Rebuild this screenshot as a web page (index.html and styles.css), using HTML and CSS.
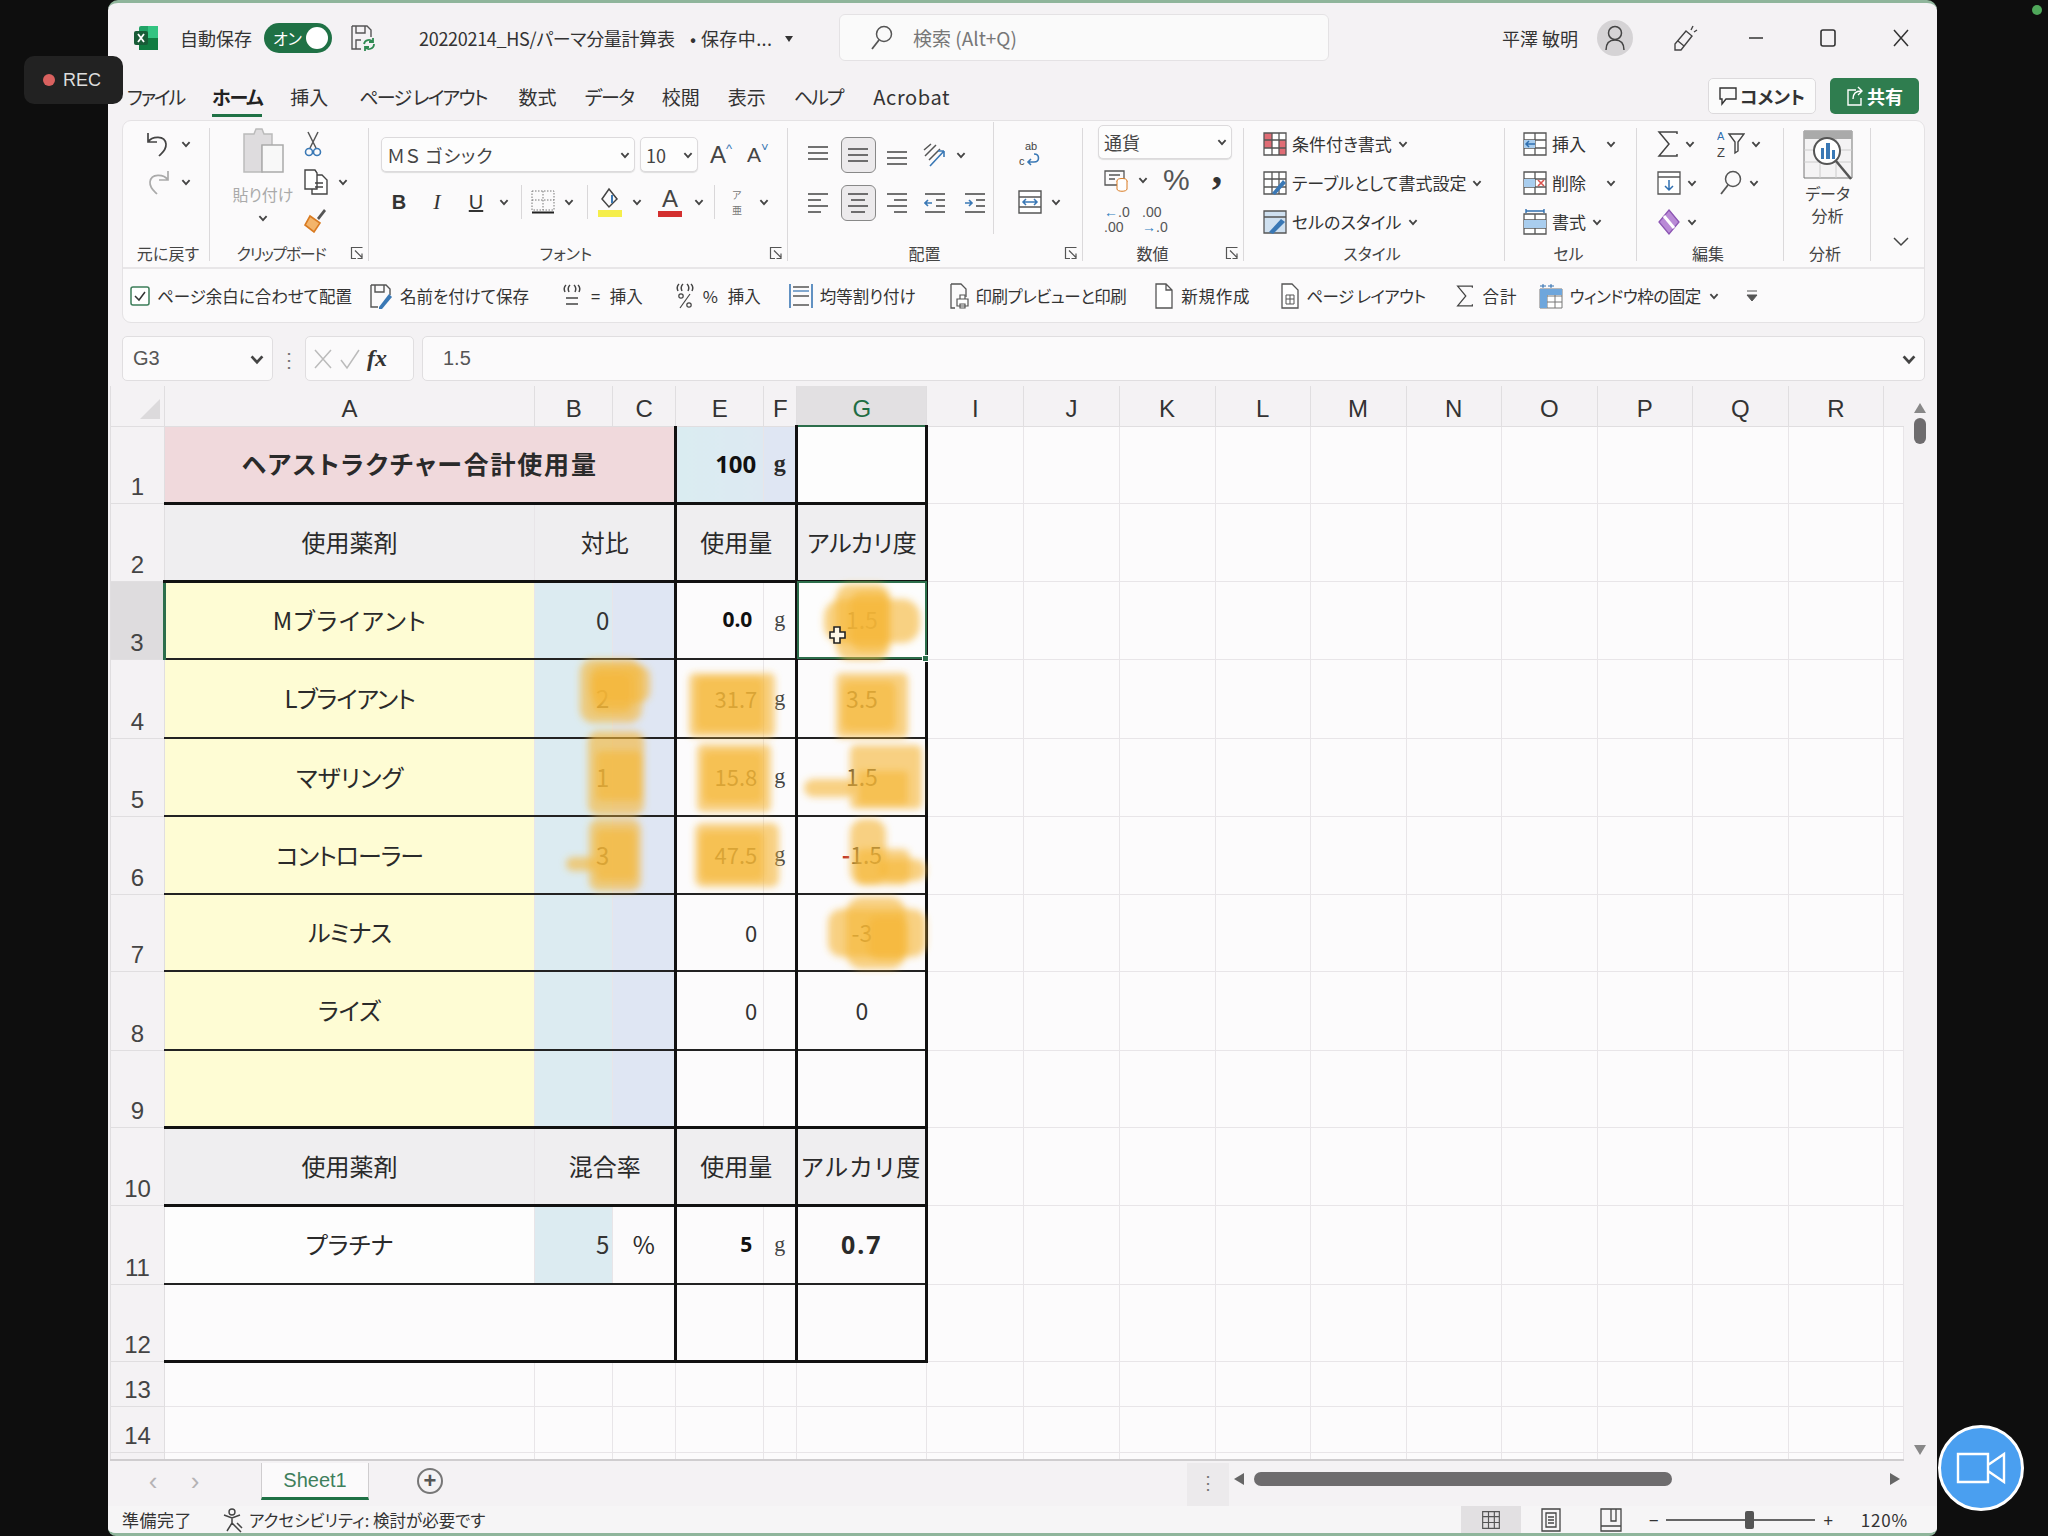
FILE: index.html
```html
<!DOCTYPE html>
<html lang="ja">
<head>
  <meta charset="UTF-8"/>
  <title>20220214_HSパーマ分量計算表 - Excel</title>
  <link rel="stylesheet" href="styles.css">
</head>
<body>

<svg class="defs" width="0" height="0">
  <symbol id="chev" viewBox="0 0 10 10"><path d="M2 3.5 5 6.8 8 3.5" fill="none" stroke="#444" stroke-width="1.5"/></symbol>
  <symbol id="launch" viewBox="0 0 14 14"><path d="M1.5 6V1.5H12.5M1.5 1.5V12.5H6M5 4.5 12 11.5M12 7.5V12.5H7.5" fill="none" stroke="#555" stroke-width="1.2"/></symbol>
  <symbol id="lines-top" viewBox="0 0 22 22"><path d="M1 3H21M1 9H21M1 15H21" stroke="#444" stroke-width="1.6"/></symbol>
  <symbol id="lines-mid" viewBox="0 0 22 22"><path d="M1 5H21M1 11H21M1 17H21" stroke="#444" stroke-width="1.6"/></symbol>
  <symbol id="lines-bot" viewBox="0 0 22 22"><path d="M1 8H21M1 14H21M1 20H21" stroke="#444" stroke-width="1.6"/></symbol>
  <symbol id="al-left" viewBox="0 0 22 22"><path d="M1 2H21M1 8H14M1 14H21M1 20H14" stroke="#444" stroke-width="1.6"/></symbol>
  <symbol id="al-center" viewBox="0 0 22 22"><path d="M1 2H21M4 8H18M1 14H21M4 20H18" stroke="#444" stroke-width="1.6"/></symbol>
  <symbol id="al-right" viewBox="0 0 22 22"><path d="M1 2H21M8 8H21M1 14H21M8 20H21" stroke="#444" stroke-width="1.6"/></symbol>
  <symbol id="cells" viewBox="0 0 24 24"><path d="M2 2H22V22H2ZM2 8H22M2 15H22M9 2V22M16 2V22" fill="none" stroke="#555" stroke-width="1.4"/></symbol>
</svg>

<div class="rec"><span class="rec-dot"></span>REC</div>
<span class="green-dot"></span>
<div class="cam-btn">
  <svg width="52" height="34" viewBox="0 0 52 34"><path d="M3 3H33V31H3ZM33 14 49 3V31L33 20" fill="none" stroke="#fff" stroke-width="2.4"/></svg>
</div>

<div class="window">

  <div class="titlebar">
    <svg class="logo" width="26" height="26" viewBox="0 0 26 26"><rect x="6" y="1" width="19" height="24" rx="2" fill="#21a366"/><rect x="15" y="1" width="10" height="12" fill="#33c481"/><rect x="6" y="13" width="19" height="12" fill="#107c41"/><rect x="1" y="6" width="14" height="14" rx="2" fill="#185c37"/><path d="M5 9 11 17M11 9 5 17" stroke="#fff" stroke-width="1.800"/></svg>
    <span class="autosave">自動保存</span>
    <span class="toggle"><span>オン</span><i></i></span>
    <svg class="save-sync" width="26" height="28" viewBox="0 0 26 28"><path d="M2 2H17L21 6V13M2 2V25H11M6 2V9H15V2M6 25V16H11" fill="none" stroke="#555" stroke-width="1.4"/><path d="M14 20a5 5 0 0 1 9-2M24 20a5 5 0 0 1-9 3M23 14V18H19M15 27V23H19" fill="none" stroke="#2f8a52" stroke-width="1.8"/></svg>
    <span class="doc-name">20220214_HS/パーマ分量計算表</span>
    <span class="doc-state">• 保存中...</span>
    <span class="caret"></span>
    <div class="searchbox">
      <svg width="24" height="26" viewBox="0 0 24 26"><circle cx="14" cy="9" r="7.5" fill="none" stroke="#555" stroke-width="1.5"/><path d="M9 15 2 24" stroke="#555" stroke-width="1.8"/></svg>
      <span>検索 (Alt+Q)</span>
    </div>
    <span class="user-name">平澤 敏明</span>
    <span class="avatar"><svg width="22" height="28" viewBox="0 0 22 28"><circle cx="11" cy="9" r="6.5" fill="none" stroke="#444" stroke-width="1.5"/><path d="M2 26c0-7 4-10 9-10s9 3 9 10" fill="none" stroke="#444" stroke-width="1.5"/></svg></span>
    <svg class="pen" width="26" height="28" viewBox="0 0 26 28"><path d="M14 7 20 12 9 26 3 26 3 20ZM6 17 12 22" fill="none" stroke="#444" stroke-width="1.4"/><path d="M19 6 21 2M22 8 25 6" stroke="#444" stroke-width="1.4"/></svg>
    <div class="win-btns">
      <svg width="16" height="16" viewBox="0 0 16 16"><path d="M1 8H15" stroke="#333" stroke-width="1.6"/></svg>
      <svg width="16" height="18" viewBox="0 0 16 18"><rect x="1" y="1" width="14" height="16" rx="2" fill="none" stroke="#333" stroke-width="1.6"/></svg>
      <svg width="18" height="18" viewBox="0 0 18 18"><path d="M2 1 16 17M16 1 2 17" stroke="#333" stroke-width="1.5"/></svg>
    </div>
  </div>

  <div class="menubar">
    <nav class="tabs">
      <span class="t-file">ファイル</span>
      <span class="on t-home">ホーム</span>
      <span>挿入</span>
      <span class="t-page">ページ レイアウト</span>
      <span>数式</span>
      <span class="t-data">データ</span>
      <span>校閲</span>
      <span>表示</span>
      <span class="t-help">ヘルプ</span>
      <span class="t-acro">Acrobat</span>
    </nav>
    <button class="comment-btn"><svg width="18" height="20" viewBox="0 0 18 20"><path d="M1 2H17V13H7L3 18V13H1Z" fill="none" stroke="#333" stroke-width="1.4"/></svg>コメント</button>
    <button class="share-btn"><svg width="18" height="22" viewBox="0 0 18 22"><path d="M10 5H2V20H15V13M7 14C7 9 10 6 15 6M12 2 16 6 12 10" fill="none" stroke="#fff" stroke-width="1.4"/></svg>共有</button>
  </div>

  <div class="ribbon">
    <div class="ribbon-main">

      <section class="group g-undo">
        <div class="gbody undo-body">
          <div class="undo-row">
            <svg width="26" height="26" viewBox="0 0 26 26"><path d="M3 2V11H12M3 11C7 5 20 4 21 13 21.500 19 17 22 14 25" fill="none" stroke="#444" stroke-width="1.7"/></svg>
            <svg class="chv" width="12" height="12"><use href="#chev"/></svg>
          </div>
          <div class="undo-row dim">
            <svg width="26" height="26" viewBox="0 0 26 26"><path d="M23 2V11H14M23 11C19 5 6 4 5 13 4.500 19 9 22 12 25" fill="none" stroke="#aaa" stroke-width="1.7"/></svg>
            <svg class="chv" width="12" height="12"><use href="#chev"/></svg>
          </div>
        </div>
        <div class="glabel"><span></span><span>元に戻す</span><span></span></div>
      </section>

      <section class="group g-clip">
        <div class="gbody clip-body">
          <div class="paste">
            <svg width="42" height="46" viewBox="0 0 42 46"><path d="M2 6H12L14 1H20L22 6H30V18H20V44H2Z" fill="#dedcde" stroke="#bbb" stroke-width="1.500"/><rect x="20" y="17" width="21" height="27" fill="#f8f8f8" stroke="#aaa" stroke-width="1.500"/></svg>
            <span>貼り付け</span>
            <svg width="12" height="12"><use href="#chev"/></svg>
          </div>
          <div class="clip-tools">
            <svg width="20" height="26" viewBox="0 0 20 26"><path d="M5 1 13 17M15 1 7 17" stroke="#555" stroke-width="1.5"/><circle cx="6" cy="21" r="3.500" fill="none" stroke="#3a78b5" stroke-width="1.6"/><circle cx="14" cy="21" r="3.500" fill="none" stroke="#3a78b5" stroke-width="1.6"/></svg>
            <span class="copy-row">
              <svg width="26" height="26" viewBox="0 0 26 26"><path d="M2 1H12L14 4V20H2ZM14 6H19L24 11V25H9V20M12 14H20M12 18H20" fill="#fff" stroke="#444" stroke-width="1.400"/></svg>
              <svg width="12" height="12"><use href="#chev"/></svg>
            </span>
            <svg width="24" height="26" viewBox="0 0 24 26"><path d="M14 11 21 2 23 4 16 13Z" fill="#555"/><path d="M7 9 17 16 11 25 2 18Z" fill="#f3b46a" stroke="#d97b22" stroke-width="1.600"/></svg>
          </div>
        </div>
        <div class="glabel"><span></span><span>クリップボード</span><svg class="lnch" width="14" height="14"><use href="#launch"/></svg></div>
      </section>

      <section class="group g-font">
        <div class="gbody font-body">
          <div class="font-row1">
            <div class="combo font-combo"><span>ＭＳ ゴシック</span><svg width="12" height="12"><use href="#chev"/></svg></div>
            <div class="combo size-combo"><span>10</span><svg width="12" height="12"><use href="#chev"/></svg></div>
            <span class="grow">A<sup>^</sup></span>
            <span class="shrink">A<sup>˅</sup></span>
          </div>
          <div class="font-row2">
            <b class="fb">B</b>
            <i class="fi">I</i>
            <u class="fu">U</u>
            <svg width="12" height="12"><use href="#chev"/></svg>
            <span class="vsep"></span>
            <svg width="24" height="24" viewBox="0 0 24 24"><path d="M1 1H23V20H1ZM12 1V20M1 10H23" fill="none" stroke="#777" stroke-width="1" stroke-dasharray="1.500 1.500"/><path d="M1 22.500H23" stroke="#222" stroke-width="2"/></svg>
            <svg width="12" height="12"><use href="#chev"/></svg>
            <span class="vsep"></span>
            <svg width="26" height="30" viewBox="0 0 26 30"><path d="M12 2 20 12 12 20 5 12Z" fill="none" stroke="#444" stroke-width="1.500"/><path d="M15 8V16" stroke="#3a78b5" stroke-width="2"/><rect x="1" y="23" width="24" height="7" fill="#f5ee4b"/></svg>
            <svg width="12" height="12"><use href="#chev"/></svg>
            <span class="font-color">A</span>
            <svg width="12" height="12"><use href="#chev"/></svg>
            <span class="vsep"></span>
            <span class="phonetic">ア<br>亜</span>
            <svg width="12" height="12"><use href="#chev"/></svg>
          </div>
        </div>
        <div class="glabel"><span></span><span>フォント</span><svg class="lnch" width="14" height="14"><use href="#launch"/></svg></div>
      </section>

      <section class="group g-align">
        <div class="gbody align-body">
          <div class="align-main">
            <div class="align-row">
              <svg width="22" height="22"><use href="#lines-top"/></svg>
              <span class="pressed"><svg width="22" height="22"><use href="#lines-mid"/></svg></span>
              <svg width="22" height="22"><use href="#lines-bot"/></svg>
              <svg width="26" height="26" viewBox="0 0 26 26"><path d="M3 14 14 3M7 18 18 7M2 8 9 2" stroke="#555" stroke-width="1.500"/><path d="M8 24 22 9M22 9H16M22 9V15" fill="none" stroke="#3a78b5" stroke-width="1.600"/></svg>
              <svg width="12" height="12"><use href="#chev"/></svg>
            </div>
            <div class="align-row">
              <svg width="22" height="22"><use href="#al-left"/></svg>
              <span class="pressed"><svg width="22" height="22"><use href="#al-center"/></svg></span>
              <svg width="22" height="22"><use href="#al-right"/></svg>
              <svg width="22" height="22" viewBox="0 0 22 22"><path d="M1 2H21M12 8H21M12 14H21M1 20H21" stroke="#444" stroke-width="1.600"/><path d="M8 11H1M4 8 1 11 4 14" fill="none" stroke="#3a78b5" stroke-width="1.600"/></svg>
              <svg width="22" height="22" viewBox="0 0 22 22"><path d="M1 2H21M12 8H21M12 14H21M1 20H21" stroke="#444" stroke-width="1.600"/><path d="M1 11H8M5 8 8 11 5 14" fill="none" stroke="#3a78b5" stroke-width="1.600"/></svg>
            </div>
          </div>
          <div class="align-wrap">
            <div class="wrap-row"><svg width="24" height="28" viewBox="0 0 24 28"><text x="7" y="10" class="ab">ab</text><text x="1" y="25" class="ab">c</text><path d="M10 22H16C22 22 22 14 16 14M13 19 10 22 13 25" fill="none" stroke="#3a78b5" stroke-width="1.600"/></svg></div>
            <div class="wrap-row"><svg width="24" height="24" viewBox="0 0 24 24"><path d="M1 1H23V23H1ZM1 7H23M1 17H23" fill="#fff" stroke="#555" stroke-width="1.400"/><path d="M5 12H19M8 9 5 12 8 15M16 9 19 12 16 15" fill="none" stroke="#3a78b5" stroke-width="1.500"/></svg><svg width="12" height="12"><use href="#chev"/></svg></div>
          </div>
        </div>
        <div class="glabel"><span></span><span>配置</span><svg class="lnch" width="14" height="14"><use href="#launch"/></svg></div>
      </section>

      <section class="group g-num">
        <div class="gbody num-body">
          <div class="combo num-combo"><span>通貨</span><svg width="12" height="12"><use href="#chev"/></svg></div>
          <div class="num-row">
            <svg width="24" height="24" viewBox="0 0 24 24"><path d="M1 3H20V17H1ZM5 7H16M5 11H11" fill="none" stroke="#555" stroke-width="1.300"/><ellipse cx="18" cy="13" rx="5" ry="2.500" fill="#fff" stroke="#d97b22"/><path d="M13 13V21C13 24 23 24 23 21V13" fill="#fff" stroke="#d97b22"/></svg>
            <svg width="12" height="12"><use href="#chev"/></svg>
            <span class="pct">%</span>
            <span class="comma">,</span>
          </div>
          <div class="num-row dec-row">
            <span class="dec"><i>←</i>.0<br>.00</span>
            <span class="dec">.00<br><i>→</i>.0</span>
          </div>
        </div>
        <div class="glabel"><span></span><span>数値</span><svg class="lnch" width="14" height="14"><use href="#launch"/></svg></div>
      </section>

      <section class="group g-style">
        <div class="gbody rows3 style-body">
          <div class="rrow"><svg width="24" height="24" viewBox="0 0 24 24"><path d="M1 1H23V23H1Z" fill="#fff"/><path d="M1 1H9V16H1ZM16 8H23V23H16Z" fill="#e06c75"/><path d="M1 1H23V23H1ZM1 8H23M1 16H23M9 1V23M16 1V23" fill="none" stroke="#555" stroke-width="1.300"/></svg><span>条件付き書式</span><svg width="12" height="12"><use href="#chev"/></svg></div>
          <div class="rrow"><svg width="24" height="24" viewBox="0 0 24 24"><path d="M1 1H23V23H1ZM1 8H23M1 16H23M9 1V23M16 1V23" fill="#fff" stroke="#555" stroke-width="1.300"/><path d="M9 22 20 9 23 12 12 24Z" fill="#3a78b5"/></svg><span>テーブルとして書式設定</span><svg width="12" height="12"><use href="#chev"/></svg></div>
          <div class="rrow"><svg width="24" height="24" viewBox="0 0 24 24"><path d="M1 1H23V23H1Z" fill="#cfe0f0" stroke="#555" stroke-width="1.300"/><path d="M1 7H23" stroke="#555" stroke-width="1.300"/><path d="M6 22 18 9 22 12 10 24Z" fill="#3a78b5"/></svg><span>セルのスタイル</span><svg width="12" height="12"><use href="#chev"/></svg></div>
        </div>
        <div class="glabel"><span></span><span>スタイル</span><span></span></div>
      </section>

      <section class="group g-cells">
        <div class="gbody rows3 cells-body">
          <div class="rrow"><svg width="24" height="24" viewBox="0 0 24 24"><path d="M1 1H23V23H1ZM1 8H23M1 16H23M12 1V23" fill="#fff" stroke="#555" stroke-width="1.300"/><path d="M1 8H12V16H1Z" fill="#a9cdee"/><path d="M12 12H3M6 9 3 12 6 15" fill="none" stroke="#2f6fb0" stroke-width="1.500"/></svg><span class="cell-name">挿入</span><svg width="12" height="12"><use href="#chev"/></svg></div>
          <div class="rrow"><svg width="24" height="24" viewBox="0 0 24 24"><path d="M1 1H23V23H1ZM1 8H23M1 16H23M12 1V23" fill="#fff" stroke="#555" stroke-width="1.300"/><path d="M1 8H12V16H1Z" fill="#a9cdee"/><path d="M15 9 21 15M21 9 15 15" stroke="#d9534f" stroke-width="1.600"/></svg><span class="cell-name">削除</span><svg width="12" height="12"><use href="#chev"/></svg></div>
          <div class="rrow"><svg width="24" height="26" viewBox="0 0 24 26"><path d="M1 5H23V25H1ZM1 11H23M1 19H23M12 5V25" fill="#fff" stroke="#555" stroke-width="1.300"/><path d="M1 11H23V19H1Z" fill="#a9cdee"/><path d="M3 2H21M3 0V4M21 0V4" stroke="#2f6fb0" stroke-width="1.400"/></svg><span>書式</span><svg width="12" height="12"><use href="#chev"/></svg></div>
        </div>
        <div class="glabel"><span></span><span>セル</span><span></span></div>
      </section>

      <section class="group g-edit">
        <div class="gbody rows3 edit-body">
          <div class="rrow">
            <svg width="22" height="26" viewBox="0 0 22 26"><path d="M20 3V1H2L12 13 2 25H20V23" fill="none" stroke="#444" stroke-width="1.500"/></svg>
            <svg width="12" height="12"><use href="#chev"/></svg>
            <svg class="ed2" width="28" height="30" viewBox="0 0 28 30"><text x="0" y="11" class="az-a">A</text><text x="0" y="28" class="az-z">Z</text><path d="M12 5H27L21 13V22L18 24V13Z" fill="none" stroke="#444" stroke-width="1.400"/></svg>
            <svg width="12" height="12"><use href="#chev"/></svg>
          </div>
          <div class="rrow">
            <svg width="24" height="24" viewBox="0 0 24 24"><path d="M1 1H23V23H1ZM1 6H23" fill="#fff" stroke="#555" stroke-width="1.300"/><path d="M12 9V19M8 15 12 19 16 15" fill="none" stroke="#2f6fb0" stroke-width="1.500"/></svg>
            <svg width="12" height="12"><use href="#chev"/></svg>
            <svg class="ed2b" width="24" height="28" viewBox="0 0 24 26"><circle cx="14" cy="9" r="7.500" fill="none" stroke="#555" stroke-width="1.500"/><path d="M9 15 2 24" stroke="#555" stroke-width="1.800"/></svg>
            <svg width="12" height="12"><use href="#chev"/></svg>
          </div>
          <div class="rrow">
            <svg width="24" height="26" viewBox="0 0 24 26"><path d="M12 1 22 13 12 25 2 13Z" fill="#b98ad6" stroke="#8c55b3" stroke-width="1.300"/><path d="M7 7 17 19" stroke="#fff" stroke-width="3"/></svg>
            <svg width="12" height="12"><use href="#chev"/></svg>
          </div>
        </div>
        <div class="glabel"><span></span><span>編集</span><span></span></div>
      </section>

      <section class="group g-ana">
        <div class="gbody ana-body">
          <svg width="50" height="50" viewBox="0 0 50 50"><path d="M1 1H49V48H1Z" fill="#f4f3f4" stroke="#777"/><path d="M1 9H49V1H1Z" fill="#aaa"/><path d="M1 20H49M1 32H49M17 9V48M33 9V48" stroke="#ccc"/><circle cx="24" cy="21" r="13" fill="#fff" stroke="#555" stroke-width="2"/><path d="M18 18h3v11h-3ZM23 13h4v16h-4ZM29 20h3v9h-3Z" fill="#3a78b5"/><path d="M33 31 48 49" stroke="#555" stroke-width="2.500"/></svg>
          <span>データ<br>分析</span>
        </div>
        <div class="glabel"><span></span><span>分析</span><span></span></div>
      </section>

      <svg class="collapse" width="18" height="14" viewBox="0 0 18 14"><path d="M2 3 9 10 16 3" fill="none" stroke="#444" stroke-width="1.500"/></svg>
    </div>

    <div class="qat">
      <span class="qi qi-check"><svg width="20" height="20" viewBox="0 0 20 20"><rect x="1" y="1" width="18" height="18" rx="2" fill="#fff" stroke="#3d7d5a" stroke-width="1.500"/><path d="M5 10 9 14 15 6" fill="none" stroke="#333" stroke-width="1.500"/></svg>ページ余白に合わせて配置</span>
      <span class="qi qi-save"><svg width="24" height="26" viewBox="0 0 24 26"><path d="M2 2H17L21 6V12M2 2V24H9M6 2V9H15V2" fill="none" stroke="#555" stroke-width="1.400"/><path d="M10 24 20 11 23 14 13 26H10Z" fill="#3a78b5"/></svg>名前を付けて保存</span>
      <span class="qi qi-eq"><svg width="22" height="26" viewBox="0 0 22 26"><path d="M5 2Q2 5 4 9M9 2Q6 5 8 9M13 2Q16 5 14 9M17 2Q20 5 18 9" fill="none" stroke="#444" stroke-width="1.500"/><path d="M5 15H17M5 21H17" stroke="#444" stroke-width="1.500"/></svg>= 挿入</span>
      <span class="qi qi-pc"><svg width="22" height="26" viewBox="0 0 22 26"><path d="M5 1Q2 4 4 8M9 1Q6 4 8 8M13 1Q16 4 14 8M17 1Q20 4 18 8" fill="none" stroke="#444" stroke-width="1.500"/><circle cx="7" cy="13" r="2.200" fill="none" stroke="#444" stroke-width="1.200"/><circle cx="15" cy="22" r="2.200" fill="none" stroke="#444" stroke-width="1.200"/><path d="M16 11 6 25" stroke="#444" stroke-width="1.200"/></svg>% 挿入</span>
      <span class="qi qi-dist"><svg width="24" height="26" viewBox="0 0 24 26"><path d="M1 1V25M23 1V25" stroke="#2f6fb0" stroke-width="1.500"/><path d="M4 4H20M4 13H20M4 22H20" stroke="#555" stroke-width="1.500"/><path d="M4 8H20" stroke="#2f6fb0" stroke-width="1.200"/></svg>均等割り付け</span>
      <span class="qi qi-print"><svg width="20" height="26" viewBox="0 0 20 26"><path d="M2 1H12L17 6V14M2 1V25H6" fill="none" stroke="#555" stroke-width="1.300"/><path d="M8 16H19V23H8ZM11 16V12H16V16M11 21H16V25H11Z" fill="#fff" stroke="#555" stroke-width="1.200"/></svg>印刷プレビューと印刷</span>
      <span class="qi qi-new"><svg width="20" height="26" viewBox="0 0 20 26"><path d="M2 1H12L18 7V25H2ZM12 1V7H18" fill="#fff" stroke="#555" stroke-width="1.300"/></svg>新規作成</span>
      <span class="qi qi-pl"><svg width="18" height="26" viewBox="0 0 18 26"><path d="M1 1H11L17 7V25H1Z" fill="#fff" stroke="#555" stroke-width="1.300"/><path d="M5 12H13V21H5ZM5 16H13M9 12V21" fill="none" stroke="#555"/></svg>ページ レイアウト</span>
      <span class="qi qi-sum"><svg width="18" height="24" viewBox="0 0 22 26"><path d="M20 3V1H2L12 13 2 25H20V23" fill="none" stroke="#444" stroke-width="1.500"/></svg>合計</span>
      <span class="qi qi-fr"><svg width="24" height="26" viewBox="0 0 24 26"><path d="M1 6H23V25H1ZM1 13H23M1 19H23M8 6V25M16 6V25" fill="#fff" stroke="#777"/><path d="M1 6H8V25H1ZM8 6H23V12H8Z" fill="#6ea6dc"/><path d="M4 1V5M1 3H7M12 1V5M9 3H15" stroke="#2f6fb0"/></svg>ウィンドウ枠の固定<svg width="12" height="12"><use href="#chev"/></svg></span>
      <svg class="qat-more" width="14" height="14" viewBox="0 0 14 14"><path d="M2 2H12M2 6H12L7 12Z" fill="#555" stroke="#555"/></svg>
    </div>
  </div>

  <div class="formula">
    <div class="namebox"><span>G3</span><svg width="18" height="18"><use href="#chev"/></svg></div>
    <span class="f-dots">⋮</span>
    <div class="fx-box">
      <svg width="20" height="22" viewBox="0 0 20 22"><path d="M2 2 18 20M18 2 2 20" stroke="#bbb" stroke-width="1.500"/></svg>
      <svg width="22" height="22" viewBox="0 0 22 22"><path d="M2 12 8 20 20 2" fill="none" stroke="#bbb" stroke-width="1.500"/></svg>
      <i>fx</i>
    </div>
    <div class="f-input"><span>1.5</span><svg width="18" height="18"><use href="#chev"/></svg></div>
  </div>

  <div class="sheet-wrap">
    <div class="sheet">
      <table class="grid">
        <colgroup>
          <col class="c-h"><col class="c-a"><col class="c-b"><col class="c-c"><col class="c-e"><col class="c-f"><col class="c-g"><col class="c-i">
          <col class="c-n"><col class="c-n2"><col class="c-n"><col class="c-n2"><col class="c-n"><col class="c-n2"><col class="c-n"><col class="c-n2"><col class="c-n"><col class="c-s">
        </colgroup>
        <thead>
          <tr class="heads">
            <th class="corner"><span></span></th><th>A</th><th>B</th><th>C</th><th>E</th><th>F</th><th class="sel-h">G</th><th>I</th><th>J</th><th>K</th><th>L</th><th>M</th><th>N</th><th>O</th><th>P</th><th>Q</th><th>R</th><th></th>
          </tr>
        </thead>
        <tbody>
          <tr class="r1">
            <th>1</th>
            <td colspan="3" class="k title-cell">ヘアストラクチャー合計使用量</td>
            <td class="k e total num-b">100</td><td class="k f total-g unit-b">g</td>
            <td class="k g"></td>
            <td></td><td></td><td></td><td></td><td></td><td></td><td></td><td></td><td></td><td></td><td></td>
          </tr>
          <tr class="r2">
            <th>2</th>
            <td class="k hd">使用薬剤</td><td colspan="2" class="k hd">対比</td>
            <td colspan="2" class="k hd e">使用量</td>
            <td class="k hd g">アルカリ度</td>
            <td></td><td></td><td></td><td></td><td></td><td></td><td></td><td></td><td></td><td></td><td></td>
          </tr>
          <tr class="r3 thin">
            <th class="sel-row">3</th>
            <td class="k yl sel-a wide">Mブライアント</td><td class="k bl val">0</td><td class="k cl"></td>
            <td class="k e num-b small">0.0</td><td class="k f unit">g</td>
            <td class="k g sel-cell val-c">1.5<i class="handle"></i></td>
            <td></td><td></td><td></td><td></td><td></td><td></td><td></td><td></td><td></td><td></td><td></td>
          </tr>
          <tr class="r4 thin">
            <th>4</th>
            <td class="k yl narrow">Lブライアント</td><td class="k bl val">2</td><td class="k cl"></td>
            <td class="k e val-e">31.7</td><td class="k f unit">g</td>
            <td class="k g val-c">3.5</td>
            <td></td><td></td><td></td><td></td><td></td><td></td><td></td><td></td><td></td><td></td><td></td>
          </tr>
          <tr class="r5 thin">
            <th>5</th>
            <td class="k yl">マザリング</td><td class="k bl val">1</td><td class="k cl"></td>
            <td class="k e val-e">15.8</td><td class="k f unit">g</td>
            <td class="k g val-c">1.5</td>
            <td></td><td></td><td></td><td></td><td></td><td></td><td></td><td></td><td></td><td></td><td></td>
          </tr>
          <tr class="r6 thin">
            <th>6</th>
            <td class="k yl narrow">コントローラー</td><td class="k bl val">3</td><td class="k cl"></td>
            <td class="k e val-e">47.5</td><td class="k f unit">g</td>
            <td class="k g val-c"><span class="neg">-</span>1.5</td>
            <td></td><td></td><td></td><td></td><td></td><td></td><td></td><td></td><td></td><td></td><td></td>
          </tr>
          <tr class="r7 thin">
            <th>7</th>
            <td class="k yl narrow">ルミナス</td><td class="k bl"></td><td class="k cl"></td>
            <td class="k e val-e">0</td><td class="k f"></td>
            <td class="k g val-c">-3</td>
            <td></td><td></td><td></td><td></td><td></td><td></td><td></td><td></td><td></td><td></td><td></td>
          </tr>
          <tr class="r8 thin">
            <th>8</th>
            <td class="k yl">ライズ</td><td class="k bl"></td><td class="k cl"></td>
            <td class="k e val-e">0</td><td class="k f"></td>
            <td class="k g val-c">0</td>
            <td></td><td></td><td></td><td></td><td></td><td></td><td></td><td></td><td></td><td></td><td></td>
          </tr>
          <tr class="r9">
            <th>9</th>
            <td class="k yl"></td><td class="k bl"></td><td class="k cl"></td>
            <td class="k e"></td><td class="k f"></td>
            <td class="k g"></td>
            <td></td><td></td><td></td><td></td><td></td><td></td><td></td><td></td><td></td><td></td><td></td>
          </tr>
          <tr class="r10">
            <th>10</th>
            <td class="k hd">使用薬剤</td><td colspan="2" class="k hd">混合率</td>
            <td colspan="2" class="k hd e">使用量</td>
            <td class="k hd g tight">アルカリ度</td>
            <td></td><td></td><td></td><td></td><td></td><td></td><td></td><td></td><td></td><td></td><td></td>
          </tr>
          <tr class="r11 thin">
            <th>11</th>
            <td class="k plain">プラチナ</td><td class="k bl val">5</td><td class="k pct-cell">%</td>
            <td class="k e num-b small">5</td><td class="k f unit">g</td>
            <td class="k g bold-c">0.7</td>
            <td></td><td></td><td></td><td></td><td></td><td></td><td></td><td></td><td></td><td></td><td></td>
          </tr>
          <tr class="r12">
            <th>12</th>
            <td colspan="3" class="k"></td>
            <td class="k e"></td><td class="k f"></td>
            <td class="k g"></td>
            <td></td><td></td><td></td><td></td><td></td><td></td><td></td><td></td><td></td><td></td><td></td>
          </tr>
          <tr class="r13">
            <th>13</th><td></td><td></td><td></td><td></td><td></td><td></td><td></td><td></td><td></td><td></td><td></td><td></td><td></td><td></td><td></td><td></td><td></td>
          </tr>
          <tr class="r14">
            <th>14</th><td></td><td></td><td></td><td></td><td></td><td></td><td></td><td></td><td></td><td></td><td></td><td></td><td></td><td></td><td></td><td></td><td></td>
          </tr>
          <tr class="r15">
            <th></th><td></td><td></td><td></td><td></td><td></td><td></td><td></td><td></td><td></td><td></td><td></td><td></td><td></td><td></td><td></td><td></td><td></td>
          </tr>
        </tbody>
      </table>

      <!-- marker scribbles and the cell cursor lie over the table, in page coordinates -->
      <svg class="scribble" viewBox="110 385 1794 1075">
        <defs><filter id="soft" x="-20%" y="-20%" width="140%" height="140%"><feGaussianBlur stdDeviation="3.500"/></filter></defs>
        <g filter="url(#soft)" fill="#f5b735" fill-opacity=".62">
          <rect x="836" y="583" width="54" height="76" rx="14"/><rect x="824" y="598" width="96" height="44" rx="18"/><rect x="850" y="590" width="40" height="60" rx="12"/>
          <rect x="580" y="658" width="62" height="64" rx="14"/><rect x="590" y="664" width="60" height="38" rx="12"/><rect x="592" y="672" width="40" height="40" rx="8"/>
          <rect x="689" y="672" width="86" height="64" rx="6"/><rect x="696" y="676" width="68" height="54" rx="6"/>
          <rect x="836" y="672" width="72" height="65" rx="6"/><rect x="842" y="680" width="54" height="50" rx="8"/>
          <rect x="588" y="730" width="56" height="84" rx="10"/><rect x="596" y="750" width="46" height="50" rx="6"/>
          <rect x="697" y="743" width="74" height="68" rx="6"/><rect x="703" y="750" width="60" height="52" rx="6"/>
          <rect x="850" y="744" width="72" height="64" rx="6"/><rect x="804" y="778" width="50" height="18" rx="9"/><rect x="858" y="770" width="50" height="34" rx="4"/>
          <rect x="589" y="818" width="52" height="72" rx="10"/><rect x="566" y="856" width="30" height="14" rx="7"/><rect x="596" y="828" width="40" height="52" rx="6"/>
          <rect x="695" y="822" width="84" height="64" rx="8"/><rect x="700" y="830" width="64" height="50" rx="6"/>
          <rect x="850" y="818" width="36" height="66" rx="14"/><rect x="856" y="848" width="54" height="36" rx="8"/><rect x="880" y="858" width="46" height="22" rx="10"/>
          <rect x="846" y="896" width="60" height="72" rx="16"/><rect x="828" y="908" width="98" height="48" rx="14"/><rect x="868" y="915" width="40" height="44" rx="10"/>
        </g>
        <path d="M834 626h6v5h5v6h-5v5h-6v-5h-4v-6h4Z" fill="#fff8e6" stroke="#222" stroke-width="1.600"/>
      </svg>
    </div>
    <div class="vscroll">
      <span class="arr-up"></span>
      <span class="v-thumb"></span>
      <span class="arr-down"></span>
    </div>
  </div>

  <div class="sheetbar">
    <span class="nav-arr">‹</span><span class="nav-arr">›</span>
    <span class="sheet-tab">Sheet1</span>
    <span class="add-sheet">+</span>
    <span class="split-dots">⋮</span>
    <div class="hscroll"><span class="arr-left"></span><span class="h-thumb"></span><span class="arr-right"></span></div>
  </div>

  <div class="statusbar">
    <span class="ready">準備完了</span>
    <span class="a11y"><svg width="22" height="26" viewBox="0 0 22 26"><circle cx="10" cy="5" r="3" fill="none" stroke="#444" stroke-width="1.400"/><path d="M2 8 10 11 18 8M10 11V16M10 16 5 24M10 16 19 25M15 16 20 21" fill="none" stroke="#444" stroke-width="1.500"/></svg>アクセシビリティ: 検討が必要です</span>
    <div class="views">
      <span class="view on"><svg width="20" height="22"><use href="#cells"/></svg></span>
      <span class="view"><svg width="20" height="24" viewBox="0 0 20 24"><path d="M1 1H19V23H1ZM5 5H15V19H5ZM7 9H13M7 12H13M7 15H13" fill="none" stroke="#444" stroke-width="1.300"/></svg></span>
      <span class="view"><svg width="22" height="24" viewBox="0 0 22 24"><path d="M1 1H21V23H1ZM11 1V13H16V1M1 18H21" fill="none" stroke="#444" stroke-width="1.300"/></svg></span>
    </div>
    <div class="zoom">
      <span>−</span>
      <div class="slider"><i></i></div>
      <span>+</span>
      <span class="zoom-val">120%</span>
    </div>
  </div>

</div>

</body>
</html>
```

FILE: styles.css
```css
* { box-sizing:border-box; }
html, body {
  margin:0; padding:0; width:2048px; height:1536px; overflow:hidden;
  background:#0e0e0e; color:#222;
  font-family:"Noto Sans CJK JP", "Noto Sans", sans-serif;
  font-feature-settings:"palt";
}
.defs { position:absolute; }

/* zoom recording overlays */
.rec {
  position:absolute; left:24px; top:56px; width:99px; height:48px; z-index:5;
  background:#222; border-radius:10px; color:#ddd; font:18px "Liberation Sans", sans-serif;
  display:flex; align-items:center; padding-left:19px; gap:8px;
}
.rec-dot { width:12px; height:12px; border-radius:50%; background:#d9615f; }
.green-dot { position:absolute; left:2032px; top:5px; width:10px; height:10px; border-radius:50%; background:#4fa75a; }
.cam-btn {
  position:absolute; left:1938px; top:1425px; width:86px; height:86px; z-index:5;
  border-radius:50%; background:#4a9ff0; border:3px solid #fff;
  display:flex; align-items:center; justify-content:center;
}

.window {
  position:absolute; left:108px; top:0; width:1829px; height:1536px;
  background:#f4f2f4; border-top:3px solid #8fb59b; border-bottom:3px solid #8fb59b;
  border-radius:10px 10px 8px 8px; overflow:hidden;
  display:flex; flex-direction:column;
}

/* title bar */
.titlebar { height:69px; flex:none; display:flex; align-items:center; padding:0 0 0 25px; font-size:18px; color:#333; }
.autosave { margin-left:21px; }
.toggle {
  margin-left:12px; width:68px; height:30px; border-radius:15px; background:#1f7145;
  color:#fff; font-size:16px; display:flex; align-items:center; justify-content:space-between; padding:0 4px 0 9px;
}
.toggle i { width:22px; height:22px; border-radius:50%; background:#fff; }
.save-sync { margin-left:18px; }
.doc-name { margin-left:43px; width:258px; white-space:nowrap; letter-spacing:-.3px; }
.doc-state { margin-left:13px; width:90px; white-space:nowrap; letter-spacing:.4px; }
.caret { margin-left:5px; border:4px solid transparent; border-top:6px solid #333; margin-top:6px; }
.searchbox {
  margin-left:46px; width:490px; height:47px; background:#fafafa; border:1px solid #e4e2e4; border-radius:6px;
  display:flex; align-items:center; gap:19px; padding-left:30px; color:#777;
}
.searchbox span { font-size:19px; }
.user-name { margin-left:173px; width:78px; white-space:nowrap; }
.avatar {
  margin-left:17px; width:36px; height:36px; border-radius:50%; background:#d5d3d5;
  display:flex; align-items:center; justify-content:center;
}
.pen { margin-left:39px; }
.win-btns { margin-left:50px; display:flex; align-items:center; gap:56px; }

/* tabs */
.menubar { height:48px; flex:none; display:flex; align-items:center; padding-right:18px; }
.tabs { display:flex; gap:28px; flex:1; padding-left:19px; font-size:19px; color:#333; height:100%; align-items:center; }
.tabs span { position:relative; white-space:nowrap; }
.tabs .on { font-weight:700; color:#222; }
.tabs .on::after { content:""; position:absolute; left:0; right:0; bottom:-7px; height:3px; background:#1f7145; }
.t-file { letter-spacing:-2.2px; }
.t-home { letter-spacing:-1.3px; }
.t-page { letter-spacing:-1.8px; margin-left:3px; margin-right:4px; }
.t-data { letter-spacing:-1.3px; }
.t-help { letter-spacing:-2px; }
.t-acro { font-size:20px; letter-spacing:.6px; margin-left:3px; }
.comment-btn, .share-btn {
  font:inherit; font-size:18px; font-weight:700; height:36px; border-radius:5px; display:flex; align-items:center; justify-content:center; gap:3px; padding:0;
}
.comment-btn { width:108px; background:#fbfbfb; border:1px solid #dcdadc; color:#333; margin-right:14px; }
.share-btn { width:89px; background:#2f7d4f; border:none; color:#fff; }

/* ribbon */
.ribbon {
  flex:none; margin:0 12px 0 14px; height:203px; background:#fbfafb; border:1px solid #e4e2e4; border-radius:9px;
  display:flex; flex-direction:column;
}
.ribbon-main { height:148px; display:flex; border-bottom:2px solid #e8e6e8; }
.group { position:relative; display:flex; flex-direction:column; height:146px; padding-top:1px; }
.group::after { content:""; position:absolute; right:0; top:7px; bottom:6px; width:1px; background:#dbd9db; }
.gbody { flex:1; min-height:0; }
.glabel {
  height:29px; flex:none; display:grid; grid-template-columns:1fr auto 1fr; align-items:center;
  justify-items:center; font-size:16px; color:#444; padding-right:5px;
}
.lnch { justify-self:end; }
.g-undo { width:87px; }
.g-clip { width:159px; }
.g-font { width:419px; }
.g-align { width:295px; }
.g-num { width:161px; }
.g-style { width:261px; }
.g-cells { width:132px; }
.g-edit { width:147px; }
.g-ana { width:87px; }
.g-undo .glabel span:nth-child(2) { margin-left:8px; letter-spacing:.2px; }
.g-clip .glabel span:nth-child(2) { letter-spacing:-1.4px; margin-right:12px; }
.g-font .glabel span:nth-child(2) { margin-right:20px; }
.g-align .glabel span:nth-child(2), .g-num .glabel span:nth-child(2) { margin-right:17px; }

.undo-body { padding:9px 0 0 22px; display:flex; flex-direction:column; gap:12px; }
.undo-row { display:flex; align-items:center; gap:9px; }

.clip-body { display:flex; padding:6px 0 0 18px; }
.paste { width:70px; display:flex; flex-direction:column; align-items:center; color:#aaa; font-size:16px; }
.paste span { margin-top:8px; line-height:24px; white-space:nowrap; }
.paste svg:last-child { margin-top:6px; }
.clip-tools { display:flex; flex-direction:column; gap:12px; margin-left:5px; padding-top:3px; align-items:flex-start; }
.copy-row { display:flex; align-items:center; gap:8px; }

.font-body { padding:15px 0 0 12px; display:flex; flex-direction:column; gap:12px; }
.font-row1 { display:flex; align-items:center; height:35px; }
.combo {
  height:35px; border:1px solid #dcdadc; border-radius:5px; background:#fdfdfd; box-shadow:0 1px 1px #ddd;
  display:flex; align-items:center; justify-content:space-between; padding:0 3px 0 5px; font-size:18px; color:#444;
}
.font-combo { width:254px; letter-spacing:1px; }
.size-combo { width:58px; margin-left:5px; }
.grow, .shrink { font:24px "Liberation Sans", sans-serif; color:#444; }
.grow { margin-left:12px; width:37px; }
.shrink { width:30px; font-size:21px; }
.grow sup, .shrink sup { font-size:13px; color:#3a78b5; vertical-align:10px; line-height:0; }
.font-row2 {
  display:grid; height:36px; align-items:center; justify-items:center;
  grid-template-columns:36px 40px 38px 18px 16px 28px 24px 12px 34px 20px 46px 12px 18px 28px 26px;
}
.fb, .fi, .fu { font:20px "Liberation Sans", sans-serif; color:#333; }
.fb { font-weight:700; }
.fi { font-style:italic; font-family:"Liberation Serif", serif; font-size:22px; }
.vsep { width:1px; height:34px; background:#d9d7d9; }
.font-color { font:24px/24px "Liberation Sans", sans-serif; color:#444; border-bottom:6px solid #d32f2f; width:24px; text-align:center; }
.phonetic { font-size:10px; line-height:15px; color:#777; }

.align-body { display:flex; }
.align-main { width:206px; padding:15px 0 0 8px; display:flex; flex-direction:column; gap:12px; height:112px; border-right:1px solid #dbd9db; }
.align-row { display:grid; grid-template-columns:44px 36px 41px 36px 44px; justify-items:center; align-items:center; height:36px; }
.align-row:first-child { grid-template-columns:44px 36px 41px 36px 16px; }
.pressed {
  width:35px; height:36px; border:1px solid #888; border-radius:6px; background:#eceaec;
  display:flex; align-items:center; justify-content:center;
}
.align-wrap { padding:14px 0 0 24px; display:flex; flex-direction:column; gap:12px; }
.wrap-row { display:flex; align-items:center; height:36px; gap:8px; }
.ab { font:11px "Liberation Sans", sans-serif; fill:#444; }

.num-body { padding:3px 0 0 15px; }
.num-combo { width:134px; height:34px; }
.num-row { display:flex; align-items:center; height:40px; padding-left:6px; margin-top:1px; }
.num-row svg:nth-child(2) { margin-left:9px; }
.pct { font:30px "Liberation Sans", sans-serif; color:#555; margin-left:14px; font-weight:400; }
.comma { font:bold 42px/24px "Liberation Serif", serif; color:#333; margin:-22px 0 0 22px; }
.dec-row { gap:14px; margin-top:0; }
.dec { font:14px/15px "Liberation Sans", sans-serif; color:#555; width:24px; white-space:nowrap; }
.dec i { font-style:normal; color:#2f7dc0; font-weight:700; }

.rows3 { display:grid; grid-auto-rows:39px; align-content:start; padding-top:2px; }
.rrow { display:flex; align-items:center; gap:5px; font-size:17px; color:#333; white-space:nowrap; height:39px; }
.style-body { padding-left:19px; }
.cells-body { padding-left:18px; }
.cell-name { width:48px; }
.edit-body { padding-left:20px; }
.edit-body .ed2 { margin-left:16px; }
.edit-body .ed2b { margin-left:16px; }
.az-a { font:11px "Liberation Sans", sans-serif; fill:#2f6fb0; }
.az-z { font:13px "Liberation Sans", sans-serif; fill:#444; }

.ana-body { display:flex; flex-direction:column; align-items:center; padding:8px 0 0 0; font-size:16px; line-height:22px; text-align:center; color:#444; }
.ana-body span { margin-top:2px; }
.collapse { align-self:flex-end; margin:0 0 18px 21px; }

.qat { height:53px; display:flex; align-items:center; padding-left:7px; font-size:16.5px; color:#333; white-space:nowrap; }
.qi { display:flex; align-items:center; gap:7px; }
.qi-save { margin-left:17px; }
.qi-eq { margin-left:32px; gap:8px; word-spacing:6px; }
.qi-pc { margin-left:31px; gap:7px; word-spacing:6px; }
.qi-dist { margin-left:28px; }
.qi-print { margin-left:33px; letter-spacing:-.5px; }
.qi-new { margin-left:28px; letter-spacing:.8px; }
.qi-pl { margin-left:31px; letter-spacing:-.6px; }
.qi-sum { margin-left:30px; gap:9px; letter-spacing:1px; }
.qi-fr { margin-left:21px; letter-spacing:-.5px; }
.qat-more { margin-left:25px; }

/* formula bar */
.formula { flex:none; margin:13px 12px 0 14px; height:45px; display:flex; align-items:stretch; color:#555; font-size:20px; }
.namebox, .fx-box, .f-input { background:#fbfafb; border:1px solid #e0dee0; border-radius:5px; display:flex; align-items:center; }
.namebox { width:151px; justify-content:space-between; padding:0 6px 0 10px; font:20px "Liberation Sans", sans-serif; }
.f-dots { width:32px; text-align:center; line-height:45px; color:#777; }
.fx-box { width:109px; gap:6px; padding-left:7px; }
.fx-box i { font:italic bold 24px "Liberation Serif", serif; color:#333; }
.f-input { flex:1; margin-left:8px; justify-content:space-between; padding:0 6px 0 20px; font:20px "Liberation Sans", sans-serif; }

/* sheet */
.sheet-wrap { flex:none; height:1080px; display:flex; margin-top:5px; margin-left:2px; }
.sheet { position:relative; width:1794px; height:1075px; overflow:hidden; background:#fcfbfc; flex:none; border-bottom:2px solid #cfcdcf; }
.grid { border-collapse:collapse; table-layout:fixed; width:1794px; }
.c-h { width:54px; } .c-a { width:370px; } .c-b { width:78px; } .c-c { width:63px; }
.c-e { width:88px; } .c-f { width:33px; } .c-g { width:130px; } .c-i { width:97px; }
.c-n { width:95px; } .c-n2 { width:96px; } .c-s { width:20px; }

.grid td { border:1px solid #e8e5e8; padding:0 0 2px; font-size:24px; text-align:center; color:#2a2a2a; white-space:nowrap; }
.grid th {
  background:#f4f2f4; border:1px solid #e0dee0; font:24px "Liberation Sans", sans-serif; color:#444; padding:0;
  vertical-align:bottom; line-height:32px;
}
.heads th { height:40px; vertical-align:middle; background:#f4f2f4; color:#333; border-top:none; padding-top:7px; line-height:30px; }
.heads th:last-child { border-right:none; }
.corner span { display:block; width:0; height:0; margin:0 4px 0 auto; border-left:20px solid transparent; border-bottom:20px solid #dcdadc; }
.sel-h { background:#e2e0e2 !important; color:#1f6d44 !important; border-bottom:2px solid #2c6e4b !important; }
.sel-row { background:#dedcde !important; }

.r1 td, .r1 th { height:77px; } .r2 td, .r2 th { height:78px; } .r3 td, .r3 th { height:78px; }
.r4 td, .r4 th { height:79px; } .r5 td, .r5 th { height:78px; } .r6 td, .r6 th { height:78px; }
.r7 td, .r7 th { height:77px; } .r8 td, .r8 th { height:79px; } .r9 td, .r9 th { height:77px; }
.r10 td, .r10 th { height:78px; } .r11 td, .r11 th { height:79px; } .r12 td, .r12 th { height:77px; }
.r13 td, .r13 th { height:45px; } .r14 td, .r14 th { height:46px; } .r15 td, .r15 th { height:20px; }

/* block borders */
.grid td.k { border-bottom:3px solid #111; }
.grid .thin td.k { border-bottom:2px solid #222; }
.grid td.e { border-left:3px solid #111; }
.grid td.f { border-left:1px solid #e2dfe2; }
.grid td.g { border-left:3px solid #111; border-right:3px solid #111; }
.grid .r3 td.g, .grid .r1 td.g { background:#fdfdfd; }

.title-cell { background:#f0d9dc; font-weight:700; font-size:25px !important; letter-spacing:1.8px; }
.total { background:linear-gradient(90deg, #daecf1, #dde9f2); }
.total-g { background:#dfe6f3; }
.num-b { font:bold 24px "Noto Sans", sans-serif !important; text-align:right !important; padding-right:7px !important; color:#111 !important; }
.small { font-size:21px !important; padding-right:11px !important; }
.unit-b { font:bold 24px "Liberation Serif", serif !important; }
.unit { font:22px "Liberation Serif", serif !important; color:#444 !important; }
.hd { background:#efeef0; font-size:24px; }
.grid td.tight { font-size:24px; letter-spacing:2.4px; }
.wide { letter-spacing:1.6px; }
.narrow { letter-spacing:-1px; }
.yl { background:#fefcd4; }
.bl { background:#dcebf1; }
.cl { background:#dfe6f3; }
.sel-a { border-left:3px solid #2c6e4b !important; }
.val { text-align:right !important; padding-right:3px !important; font-size:24px; color:#333 !important; }
.val-e { text-align:right !important; padding-right:6px !important; font-size:22px !important; color:#333 !important; }
.val-c { font-size:23px !important; color:#333 !important; }
.bold-c { font:bold 25px "Noto Sans", sans-serif !important; letter-spacing:2px; }
.neg { color:#c0392b; font-weight:700; }
.pct-cell { text-align:center; font-size:24px; color:#333; }
.plain { background:#fdfdfd; }
.sel-cell { position:relative; outline:2px solid #2c6e4b; outline-offset:-2px; }
.handle { position:absolute; right:-4px; bottom:-4px; width:7px; height:7px; background:#2c6e4b; border:1px solid #fff; }

.scribble { position:absolute; left:0; top:0; width:1794px; height:1075px; pointer-events:none; }

.vscroll { width:32px; position:relative; display:flex; flex-direction:column; align-items:center; }
.arr-up { margin-top:17px; border:6px solid transparent; border-bottom:10px solid #888; border-top:none; }
.v-thumb { margin-top:5px; width:12px; height:26px; background:#6e6c6e; border-radius:6px; }
.arr-down { margin-top:auto; margin-bottom:11px; border:6px solid transparent; border-top:10px solid #888; border-bottom:none; }

/* sheet tabs */
.sheetbar { flex:none; height:43px; display:flex; align-items:flex-start; padding-left:24px; color:#aaa; position:relative; margin-top:-3px; }
.nav-arr { width:42px; font:26px/36px "Liberation Sans", sans-serif; text-align:center; color:#b5b3b5; }
.sheet-tab {
  margin-left:45px; width:108px; height:37px; background:#fbfafb; border:1px solid #cfcdcf; border-top:none; border-bottom:3px solid #1f7145;
  color:#3e7f5c; font:20px/34px "Liberation Sans", sans-serif; text-align:center;
}
.add-sheet {
  margin:5px 0 0 48px; width:26px; height:26px; border-radius:50%; border:2px solid #777; color:#555;
  font:bold 22px/21px "Liberation Sans", sans-serif; text-align:center;
}
.split-dots { margin-left:auto; width:42px; height:43px; background:#eceaec; text-align:center; font-size:18px; line-height:36px; color:#777; }
.hscroll { width:666px; margin-right:37px; display:flex; align-items:center; height:30px; margin-left:5px; }
.arr-left { border:6px solid transparent; border-right:10px solid #666; border-left:none; margin-top:2px; }
.h-thumb { margin-left:10px; width:418px; height:14px; border-radius:7px; background:#6e6c6e; margin-top:2px; }
.arr-right { margin-left:auto; border:6px solid transparent; border-left:10px solid #666; border-right:none; margin-top:2px; }

/* status bar */
.statusbar { height:30px; display:flex; align-items:center; padding-left:14px; font-size:17px; color:#333; background:#f6f5f6; white-space:nowrap; flex:1; }
.ready { letter-spacing:.5px; }
.a11y { margin-left:30px; display:flex; align-items:center; gap:5px; font-size:16.5px; }
.views { margin-left:auto; display:flex; align-items:stretch; height:100%; }
.view { width:60px; display:flex; align-items:center; justify-content:center; }
.view.on { background:#e2e0e2; }
.zoom { display:flex; align-items:center; margin:0 29px 0 8px; gap:8px; }
.slider { width:149px; height:2px; background:#666; position:relative; }
.slider i { position:absolute; left:79px; top:-8px; width:9px; height:18px; background:#555; border-radius:2px; }
.zoom-val { margin-left:20px; letter-spacing:.8px; }
```
